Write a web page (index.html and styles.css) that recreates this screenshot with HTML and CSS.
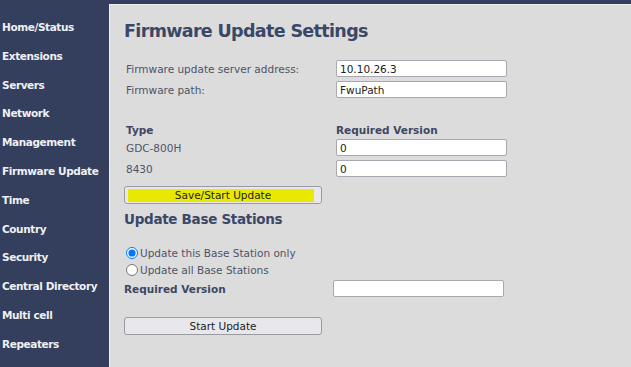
FILE: index.html
```html
<!DOCTYPE html>
<html lang="en">
<head>
    <meta charset="UTF-8">
    <title>Firmware Update Settings</title>
    <link rel="stylesheet" href="styles.css">
</head>
<body>
    <div class="layout">
        <div class="menu">
            <a class="menu-item">Home/Status</a>
            <a class="menu-item">Extensions</a>
            <a class="menu-item">Servers</a>
            <a class="menu-item">Network</a>
            <a class="menu-item">Management</a>
            <a class="menu-item">Firmware Update</a>
            <a class="menu-item">Time</a>
            <a class="menu-item">Country</a>
            <a class="menu-item">Security</a>
            <a class="menu-item">Central Directory</a>
            <a class="menu-item">Multi cell</a>
            <a class="menu-item">Repeaters</a>
        </div>

        <div class="content">
            <h1 class="title">Firmware Update Settings</h1>

            <div class="row">
                <span class="label">Firmware update server address:</span>
                <input class="field" type="text" value="10.10.26.3">
            </div>
            <div class="row">
                <span class="label">Firmware path:</span>
                <input class="field" type="text" value="FwuPath">
            </div>

            <div class="row head-row">
                <span class="label bold">Type</span>
                <span class="label bold">Required Version</span>
            </div>
            <div class="row">
                <span class="label">GDC-800H</span>
                <input class="field" type="text" value="0">
            </div>
            <div class="row">
                <span class="label">8430</span>
                <input class="field" type="text" value="0">
            </div>

            <button class="button marked">Save/Start Update</button>

            <h2 class="subtitle">Update Base Stations</h2>

            <div class="radios">
                <label class="radio"><input type="radio" name="bs" checked> Update this Base Station only</label>
                <label class="radio"><input type="radio" name="bs"> Update all Base Stations</label>
            </div>
            <div class="row req-row">
                <span class="label bold">Required Version</span>
                <input class="field" type="text" value="">
            </div>

            <button class="button start">Start Update</button>
        </div>
    </div>
</body>
</html>
```

FILE: styles.css
```css
body {
    margin: 0;
    background: #333f5c;
    font-family: 'DejaVu Sans', Verdana, sans-serif;
    font-size: 10.5px;
    color: #4d5468;
}

.layout {
    display: flex;
    height: 367px;
    padding-top: 4px;
    box-sizing: border-box;
}

.menu {
    width: 109px;
    margin-top: -4px;
    display: flex;
    flex-direction: column;
    padding-top: 20px;
}

.menu-item {
    color: #eef0f4;
    font-weight: bold;
    font-size: 10.5px;
    padding-left: 2px;
    height: 28.8px;
    line-height: 14px;
    letter-spacing: -0.4px;
}

.content {
    flex: 1;
    background: #dcdcdc;
    border-top: 1px solid #eeeeee;
    border-left: 1px solid #eeeeee;
    padding: 14px 0 0 14px;
}

.title {
    margin: 0 0 17px 0;
    font-size: 17.5px;
    letter-spacing: -0.65px;
    color: #3a4868;
    line-height: 24px;
}

.row {
    display: flex;
    align-items: center;
    height: 17px;
    margin-bottom: 4px;
    padding-left: 2px;
}

.label {
    width: 210px;
}

.bold {
    font-weight: bold;
    color: #3e4763;
}

.field {
    width: 171px;
    height: 17px;
    box-sizing: border-box;
    border: 1px solid #a8a8b0;
    border-radius: 2px;
    background: #fff;
    padding: 0 3px;
    font-family: 'DejaVu Sans', Verdana, sans-serif;
    font-size: 10.5px;
    color: #222;
}

.head-row {
    margin-top: 23px;
    margin-bottom: 1px;
}

.button {
    display: block;
    width: 198px;
    height: 18px;
    border: 1px solid #9a9aa2;
    border-radius: 3px;
    background: #e8e8ec;
    font-family: 'DejaVu Sans', Verdana, sans-serif;
    font-size: 10.5px;
    color: #222;
    padding: 0;
}

.marked {
    margin-top: 9px;
    background: linear-gradient(#e8e800, #e8e800) 3px 2px / 186px 13px no-repeat, #e8e8ec;
}

.subtitle {
    margin: 5px 0 16px 0;
    font-size: 13.5px;
    letter-spacing: -0.3px;
    color: #3a4868;
    line-height: 20px;
}

.radios {
    display: flex;
    flex-direction: column;
    gap: 1px;
    padding-left: 2px;
}

.radio {
    display: flex;
    align-items: center;
    height: 16px;
    font-size: 10.5px;
}

.radio input {
    margin: 0 2px 0 0;
    width: 12px;
    height: 12px;
}

.req-row {
    padding-left: 0;
    margin-top: 2px;
}

.req-row .label {
    width: 209px;
}

.start {
    margin-top: 20px;
}
```
